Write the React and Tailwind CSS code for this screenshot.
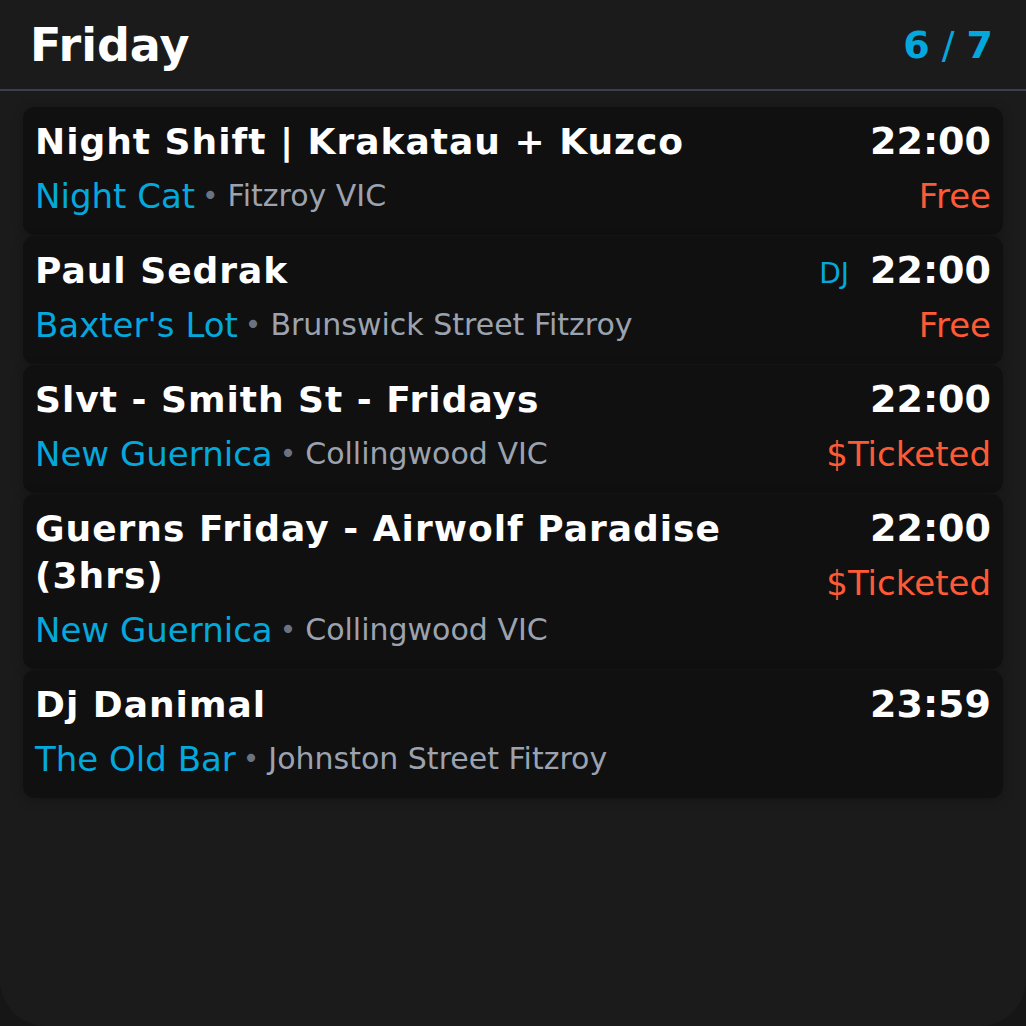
import React from "react";

const events = [
  { title: "Night Shift | Krakatau + Kuzco", venue: "Night Cat", loc: "Fitzroy VIC", time: "22:00", price: "Free" },
  { title: "Paul Sedrak", venue: "Baxter's Lot", loc: "Brunswick Street Fitzroy", time: "22:00", price: "Free", dj: true },
  { title: "Slvt - Smith St - Fridays", venue: "New Guernica", loc: "Collingwood VIC", time: "22:00", price: "$Ticketed" },
  { title: "Guerns Friday - Airwolf Paradise (3hrs)", venue: "New Guernica", loc: "Collingwood VIC", time: "22:00", price: "$Ticketed" },
  { title: "Dj Danimal", venue: "The Old Bar", loc: "Johnston Street Fitzroy", time: "23:59" },
];

function Card({ e }) {
  return (
    <div className="flex gap-4 rounded-[12px] bg-[#101010] pl-[12px] pr-[12px] pt-[11px] pb-[19px] shadow-[0_2px_12px_rgba(0,0,0,0.25)]">
      <div className="flex-1 min-w-0">
        <div className="text-[36px] leading-[47px] font-bold tracking-[1px] text-white">{e.title}</div>
        <div className="mt-[11px] flex items-center h-[40px] whitespace-nowrap">
          <span className="text-[34px] leading-[40px] text-[#04a8dc]">{e.venue}</span>
          <span className="ml-[7px] mr-[9px] text-[28px] leading-[40px] text-[#6b7280]">•</span>
          <span className="text-[30px] leading-[40px] text-[#9ca3af]">{e.loc}</span>
        </div>
      </div>
      <div className="flex flex-col items-end shrink-0">
        <div className="flex items-baseline h-[47px]">
          {e.dj && <span className="mr-[21px] text-[28px] text-[#04a8dc]">DJ</span>}
          <span className="text-[38px] leading-[47px] font-bold text-white">{e.time}</span>
        </div>
        {e.price && (
          <div className="mt-[11px] text-[34px] leading-[40px] text-[#ff5a36]">{e.price}</div>
        )}
      </div>
    </div>
  );
}

export default function App() {
  return (
    <div className="w-[1026px] h-[1026px] bg-[#161616] font-['DejaVu_Sans',sans-serif]">
      <div className="h-full rounded-b-[46px] bg-[#1b1b1b] overflow-hidden">
        <div className="flex items-center justify-between pl-[30px] pr-[33px] pt-[13px] pb-[12px] border-b-2 border-[#3a414e]">
          <div className="text-[46px] leading-[64px] font-bold text-white">Friday</div>
          <div className="text-[38px] leading-[64px] font-bold text-[#04a8dc]">
            6<span className="font-normal"> / </span>7
          </div>
        </div>
        <div className="flex flex-col gap-[1px] px-[23px] pt-[16px]">
          {events.map((e, i) => (
            <Card key={i} e={e} />
          ))}
        </div>
      </div>
    </div>
  );
}
